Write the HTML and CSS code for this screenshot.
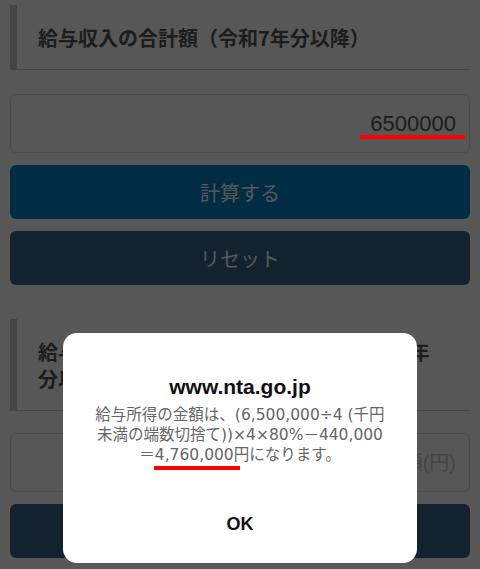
FILE: index.html
```html
<!DOCTYPE html>
<html lang="ja">
<head>
    <meta charset="UTF-8">
    <meta name="viewport" content="width=device-width, initial-scale=1.0">
    <title>給与所得の計算</title>
    <link rel="stylesheet" href="styles.css">
</head>
<body>
    <main class="calc">
        <section class="field">
            <h2 class="field-title">給与収入の合計額（令和7年分以降）</h2>
            <div class="field-input">
                <input type="text" id="shunyu" value="6500000">
                <span class="mark mark-input"></span>
            </div>
        </section>

        <button type="button" class="btn btn-calc">計算する</button>
        <button type="button" class="btn btn-reset">リセット</button>

        <section class="field field-result">
            <h2 class="field-title">給与所得控除後の給与等の金額等（令和7年分以降）</h2>
            <div class="field-input">
                <input type="text" id="shotoku" placeholder="金額(円)">
            </div>
        </section>

        <button type="button" class="btn btn-reset"></button>
    </main>

    <div class="dialog-backdrop">
        <div class="dialog">
            <p class="dialog-title">www.nta.go.jp</p>
            <p class="dialog-message">給与所得の金額は、(6,500,000÷4 (千円未満の端数切捨て))×4×80%－440,000＝<span class="mark-text">4,760,000</span>円になります。</p>
            <div class="dialog-actions">
                <button type="button">OK</button>
            </div>
        </div>
    </div>
</body>
</html>
```

FILE: styles.css
```css
body {
    margin: 0;
    background-color: #fff;
    font-family: "Noto Sans CJK JP", sans-serif;
}

.calc {
    display: flex;
    flex-direction: column;
    padding: 5px 10px 0;
}

.field-title {
    margin: 0;
    padding: 19px 24px 18px 21px;
    border-left: 7px solid #c8c8c8;
    border-bottom: 1px solid #cfcfcf;
    color: #555;
    font-size: 20px;
    line-height: 27px;
    font-weight: bold;
}

.field-input {
    position: relative;
    margin-top: 24px;
}

.field-result {
    margin-top: 34px;
}

.field-result .field-input {
    margin-top: 22px;
}

.field-input input {
    display: block;
    box-sizing: border-box;
    width: 100%;
    height: 59px;
    padding: 0 13px;
    border: 1px solid #dcdcdc;
    border-radius: 6px;
    background: #fff;
    color: #555;
    text-align: right;
    font-family: "Liberation Sans", "Noto Sans CJK JP", sans-serif;
    font-size: 22px;
}

.field-input input::placeholder {
    color: #c8c8c8;
    font-size: 20px;
}

.btn {
    display: block;
    width: 100%;
    height: 54px;
    margin-top: 12px;
    border: 0;
    border-radius: 6px;
    color: #fff;
    font-family: "Noto Sans CJK JP", sans-serif;
    font-size: 20px;
}

.btn-calc {
    background-color: #0080c8;
}

.btn-reset {
    background-color: #38648a;
}

/* 赤線の注記 */
.mark-input {
    position: absolute;
    top: 41px;
    right: 5px;
    width: 105px;
    height: 4px;
    background: #ff0000;
    z-index: 20;
}

.mark-text {
    position: relative;
}

.mark-text::after {
    content: "";
    position: absolute;
    left: -1px;
    right: -6px;
    bottom: -6px;
    height: 4px;
    background: #ff0000;
}

/* アラート */
.dialog-backdrop {
    position: fixed;
    top: 0;
    left: 0;
    right: 0;
    bottom: 0;
    z-index: 10;
    display: flex;
    justify-content: center;
    align-items: flex-end;
    padding-bottom: 6px;
    background: rgba(0, 0, 0, 0.66);
}

.dialog {
    width: 354px;
    background: #fff;
    border-radius: 14px;
    text-align: center;
}

.dialog-title {
    margin: 0;
    padding-top: 42px;
    color: #111;
    font-family: "Liberation Sans", sans-serif;
    font-size: 21px;
    line-height: 24px;
    font-weight: bold;
}

.dialog-message {
    margin: 6px 31px 0;
    color: #666;
    font-family: "DejaVu Sans", "Noto Sans CJK JP", sans-serif;
    font-size: 15.5px;
    line-height: 20px;
}

.dialog-actions {
    padding: 46px 0 27px;
}

.dialog-actions button {
    padding: 0;
    border: 0;
    background: none;
    color: #111;
    font-family: "Liberation Sans", sans-serif;
    font-size: 18px;
    line-height: 24px;
    font-weight: bold;
}
```
